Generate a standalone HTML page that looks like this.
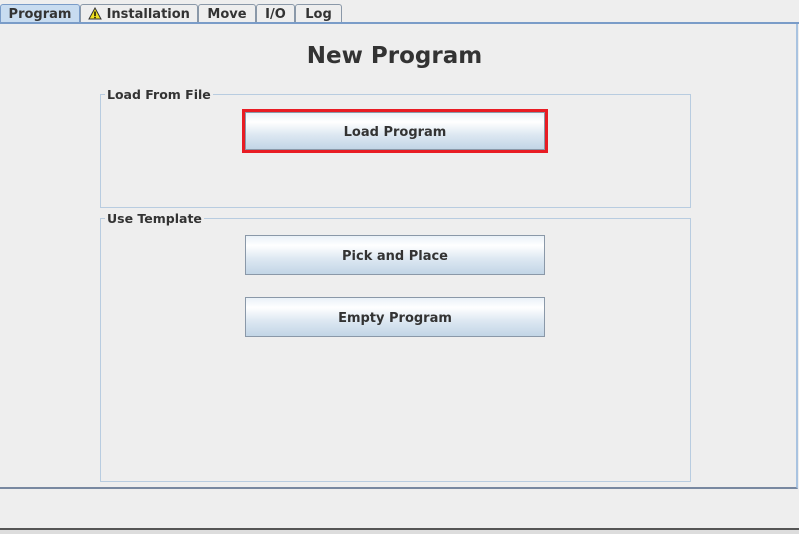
<!DOCTYPE html>
<html><head><meta charset="utf-8"><style>
*{margin:0;padding:0;box-sizing:border-box}
body{width:799px;height:534px;background:#eeeeee;position:relative;overflow:hidden;font-family:"DejaVu Sans","Liberation Sans",sans-serif;font-weight:bold;color:#333}
.tab{position:absolute;top:4px;height:19px;border:1px solid #8a98a8;border-bottom:none;font-size:13px;line-height:19px;text-align:center;color:#333;background:#eeeeee;border-radius:3px 3px 0 0}
.sel{background:#c8dcf0;border-color:#7a9cc8}
.line{position:absolute;left:0;top:22px;width:799px;height:2px;background:#7a9cc8}
.panel{position:absolute;left:0;top:24px;width:798px;height:465px;border-right:2px solid #a9c3e0;border-bottom:2px solid #7888a0}
h1{position:absolute;left:0;width:789px;top:43px;text-align:center;font-size:23px;color:#333}
.grp{position:absolute;border:1px solid #b8cce0}
.lg{position:absolute;top:-8px;left:4px;background:#eeeeee;padding:0 2px;font-size:12.5px;font-weight:bold;color:#333;line-height:16px}
.btn{position:absolute;width:300px;height:40px;border:1px solid #8a98a8;background:linear-gradient(#eaf1f8 0%,#ffffff 25%,#dde8f2 60%,#c2d5e6 100%);text-align:center;font-size:13px;line-height:42px;color:#333}
</style></head><body>
<div class="tab sel" style="left:0;width:80px">Program</div>
<div class="tab" style="left:80px;width:118px"><svg width="14" height="13" viewBox="0 0 14 13" style="vertical-align:-2px"><path d="M7 1 L13 12 L1 12 Z" fill="#f0e020" stroke="#333" stroke-width="1"/><rect x="6.3" y="4.5" width="1.4" height="4.5" fill="#000"/><rect x="6.3" y="9.8" width="1.4" height="1.4" fill="#000"/></svg> Installation</div>
<div class="tab" style="left:198px;width:58px">Move</div>
<div class="tab" style="left:256px;width:39px">I/O</div>
<div class="tab" style="left:295px;width:47px">Log</div>
<div class="line"></div>
<div class="panel"></div>
<h1>New Program</h1>
<div class="grp" style="left:100px;top:94px;width:591px;height:114px"><div class="lg">Load From File</div></div>
<div style="position:absolute;left:242px;top:109px;width:306px;height:44px;border:3px solid #e81c24"></div>
<div class="btn" style="left:245px;top:112px;height:38px;line-height:40px">Load Program</div>
<div class="grp" style="left:100px;top:218px;width:591px;height:264px"><div class="lg">Use Template</div></div>
<div class="btn" style="left:245px;top:235px">Pick and Place</div>
<div class="btn" style="left:245px;top:297px">Empty Program</div>
<div style="position:absolute;left:0;top:528px;width:799px;height:2px;background:#555"></div>
<div style="position:absolute;left:0;top:530px;width:799px;height:4px;background:#ddd"></div>
</body></html>
